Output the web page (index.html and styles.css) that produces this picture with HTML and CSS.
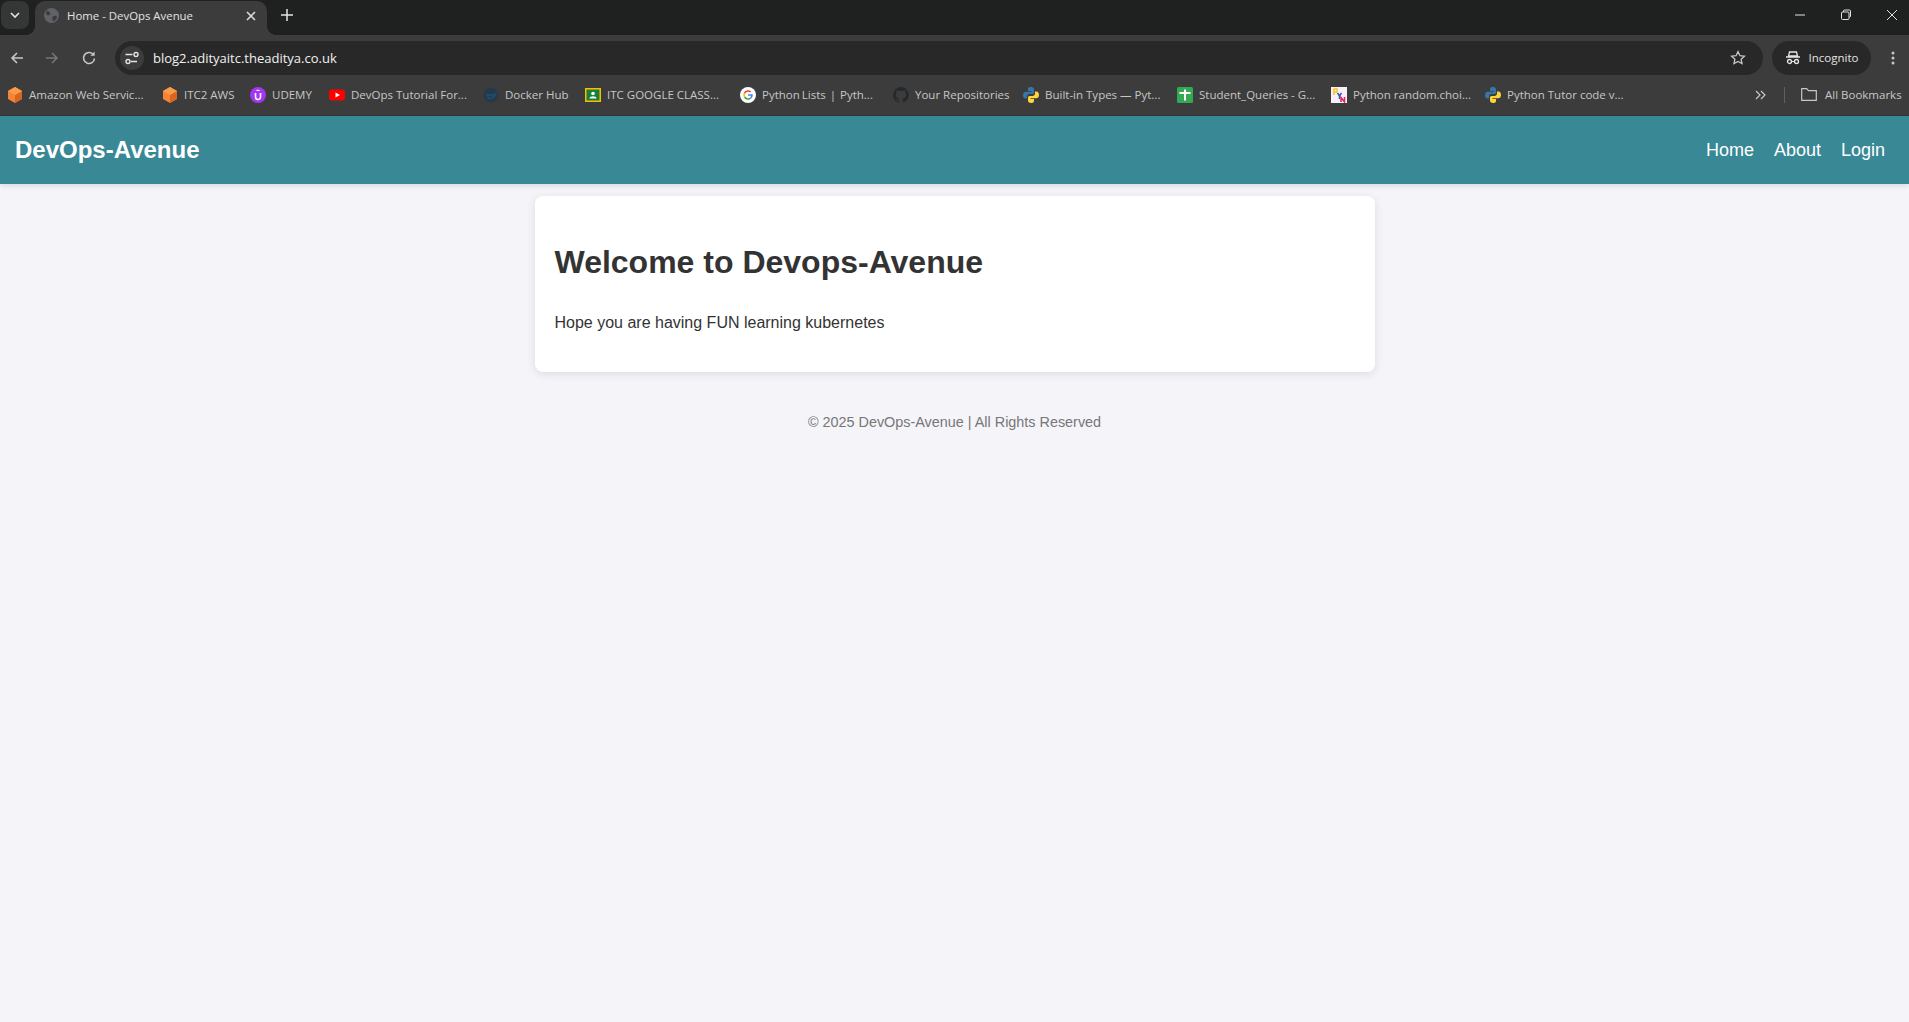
FILE: index.html
```html
<!DOCTYPE html>
<html lang="en">
<head>
    <meta charset="UTF-8">
    <title>Home - DevOps Avenue</title>
    <link rel="stylesheet" href="styles.css">
</head>
<body>
<div class="chrome">
    <div class="titlebar">
        <div class="tab-search">
            <svg width="12" height="12" viewBox="0 0 12 12"><path d="M2 4l4 4 4-4" fill="none" stroke="#e3e3e3" stroke-width="1.6"/></svg>
        </div>
        <div class="tab">
            <svg class="tab-globe" width="15" height="15" viewBox="0 0 16 16"><circle cx="8" cy="8" r="8" fill="#5f6368"/><path d="M3 3l3 1 1 3-3 1-2-2zM9 9l4-1 1 2-3 4-2-1z" fill="#3c3c3c"/></svg>
            <span class="tab-title">Home - DevOps Avenue</span>
            <svg width="12" height="12" viewBox="0 0 12 12"><path d="M2 2l8 8M10 2l-8 8" stroke="#e3e3e3" stroke-width="1.5"/></svg>
        </div>
        <svg class="new-tab" width="14" height="14" viewBox="0 0 14 14"><path d="M7 1v12M1 7h12" stroke="#e3e3e3" stroke-width="1.5"/></svg>
        <div class="win-buttons">
            <svg width="12" height="12" viewBox="0 0 12 12"><path d="M1 6h10" stroke="#e3e3e3" stroke-width="1"/></svg>
            <svg width="12" height="12" viewBox="0 0 12 12"><rect x="1.5" y="3" width="7.5" height="7.5" rx="1" fill="none" stroke="#e3e3e3"/><path d="M3.5 3V2a1 1 0 0 1 1-1h5a1 1 0 0 1 1 1v5a1 1 0 0 1-1 1H9" fill="none" stroke="#e3e3e3"/></svg>
            <svg width="12" height="12" viewBox="0 0 12 12"><path d="M1 1l10 10M11 1L1 11" stroke="#e3e3e3" stroke-width="1"/></svg>
        </div>
    </div>
    <div class="toolbar">
        <svg class="nav-icon" width="16" height="16" viewBox="0 0 16 16"><path d="M14 8H3M8 3L3 8l5 5" fill="none" stroke="#c7c7c7" stroke-width="1.6"/></svg>
        <svg class="nav-icon" width="16" height="16" viewBox="0 0 16 16"><path d="M2 8h11M8 3l5 5-5 5" fill="none" stroke="#757575" stroke-width="1.6"/></svg>
        <svg class="nav-icon nav-reload" width="16" height="16" viewBox="0 0 16 16"><path d="M13.5 8.5A5.5 5.5 0 1 1 12 4.2" fill="none" stroke="#c7c7c7" stroke-width="1.6"/><path d="M13.6 1.5v4.2H9.4z" fill="#c7c7c7"/></svg>
        <div class="omnibox">
            <div class="site-info">
                <svg width="16" height="16" viewBox="0 0 16 16"><path d="M1.5 4.5h7M13 11.500H7" stroke="#e3e3e3" stroke-width="1.4"/><circle cx="12" cy="4.5" r="2" fill="none" stroke="#e3e3e3" stroke-width="1.4"/><circle cx="4" cy="11.500" r="2" fill="none" stroke="#e3e3e3" stroke-width="1.4"/></svg>
            </div>
            <span class="url">blog2.adityaitc.theaditya.co.uk</span>
            <svg class="star" width="16" height="16" viewBox="0 0 16 16"><path d="M8 1.6l1.900 4.100 4.500.5-3.300 3 .9 4.400L8 11.400l-4 2.200.9-4.400-3.300-3 4.500-.5z" fill="none" stroke="#c7c7c7" stroke-width="1.3"/></svg>
        </div>
        <div class="incognito">
            <svg width="16" height="14" viewBox="0 0 16 14"><path d="M4.500 1h7l1 4h-9zM1 6h14" fill="none" stroke="#e3e3e3" stroke-width="1.3"/><circle cx="4.500" cy="10.500" r="2" fill="none" stroke="#e3e3e3" stroke-width="1.3"/><circle cx="11.500" cy="10.500" r="2" fill="none" stroke="#e3e3e3" stroke-width="1.3"/><path d="M6.500 10.500h3" stroke="#e3e3e3"/></svg>
            <span>Incognito</span>
        </div>
        <svg class="menu-dots" width="4" height="14" viewBox="0 0 4 14"><circle cx="2" cy="2" r="1.5" fill="#c7c7c7"/><circle cx="2" cy="7" r="1.5" fill="#c7c7c7"/><circle cx="2" cy="12" r="1.5" fill="#c7c7c7"/></svg>
    </div>
    <div class="bookmarks">
        <div class="bm bm-1">
            <svg width="16" height="16" viewBox="0 0 16 16"><path d="M8 0l7 4v8l-7 4-7-4V4z" fill="#f58536"/><path d="M8 8l7-4v8l-7 4z" fill="#d9661f"/><path d="M8 0l7 4-7 4-7-4z" fill="#fa9a4c"/></svg>
            <span>Amazon Web Servic...</span>
        </div>
        <div class="bm bm-2">
            <svg width="16" height="16" viewBox="0 0 16 16"><path d="M8 0l7 4v8l-7 4-7-4V4z" fill="#f58536"/><path d="M8 8l7-4v8l-7 4z" fill="#d9661f"/><path d="M8 0l7 4-7 4-7-4z" fill="#fa9a4c"/></svg>
            <span>ITC2 AWS</span>
        </div>
        <div class="bm bm-3">
            <svg width="16" height="16" viewBox="0 0 16 16"><circle cx="8" cy="8" r="8" fill="#a435f0"/><path d="M5.500 6v4a2.500 2.500 0 0 0 5 0V6" fill="none" stroke="#fff" stroke-width="1.6"/><path d="M8 2.500L10.500 4h-5z" fill="#fff"/></svg>
            <span>UDEMY</span>
        </div>
        <div class="bm bm-4">
            <svg width="16" height="16" viewBox="0 0 16 16"><rect y="2.500" width="16" height="11" rx="3" fill="#f00"/><path d="M6.500 5.500L11 8l-4.500 2.500z" fill="#fff"/></svg>
            <span>DevOps Tutorial For...</span>
        </div>
        <div class="bm bm-5">
            <svg width="16" height="16" viewBox="0 0 16 16"><circle cx="8" cy="8" r="7.500" fill="#26394a"/><path d="M3 8h8c1 0 2-1 2-2M4 10c2 2 6 2 8-2" fill="none" stroke="#1d5070" stroke-width="1.500"/></svg>
            <span>Docker Hub</span>
        </div>
        <div class="bm bm-6">
            <svg width="16" height="16" viewBox="0 0 16 16"><rect y="1" width="16" height="14" fill="#fbbc04"/><rect x="1.500" y="2.500" width="13" height="11" fill="#188038"/><circle cx="8" cy="6.500" r="1.800" fill="#fff"/><path d="M4.500 11.500c0-3 7-3 7 0z" fill="#fff"/></svg>
            <span>ITC GOOGLE CLASS...</span>
        </div>
        <div class="bm bm-7">
            <svg width="16" height="16" viewBox="0 0 16 16"><circle cx="8" cy="8" r="8" fill="#fff"/><path d="M8 8h4a4 4 0 0 1-1.300 3" fill="none" stroke="#4285f4" stroke-width="1.600"/><path d="M10.700 11A4 4 0 0 1 4.600 10" fill="none" stroke="#34a853" stroke-width="1.600"/><path d="M4.600 10a4 4 0 0 1 0-4" fill="none" stroke="#fbbc05" stroke-width="1.600"/><path d="M4.600 6a4 4 0 0 1 6.100-1" fill="none" stroke="#ea4335" stroke-width="1.600"/></svg>
            <span>Python Lists&nbsp; |&nbsp; Pyth...</span>
        </div>
        <div class="bm bm-8">
            <svg width="16" height="16" viewBox="0 0 16 16"><path d="M8 0a8 8 0 0 0-2.500 15.600c.4.100.5-.2.500-.4v-1.400c-2.200.5-2.700-1-2.700-1-.4-.9-.9-1.200-.9-1.200-.7-.5.100-.5.100-.5.800.100 1.200.8 1.200.8.700 1.200 1.900.9 2.300.7.100-.5.300-.9.500-1.100-1.800-.2-3.600-.9-3.600-4 0-.9.300-1.600.8-2.100-.1-.2-.4-1 .1-2.100 0 0 .7-.2 2.200.8a7.600 7.600 0 0 1 4 0c1.500-1 2.200-.8 2.200-.8.400 1.100.2 1.900.1 2.100.5.600.8 1.300.8 2.100 0 3.100-1.900 3.700-3.700 3.900.3.300.6.800.6 1.500v2.200c0 .2.100.5.600.4A8 8 0 0 0 8 0z" fill="#24292e"/></svg>
            <span>Your Repositories</span>
        </div>
        <div class="bm bm-9">
            <svg width="16" height="16" viewBox="0 0 16 16"><path d="M8 0C5 0 5 1.500 5 2.500V4h3.500v.7H3C1 4.700 0 6 0 8s1 3.500 2.500 3.500H4V9.500C4 8 5 7 6.500 7h3C10.800 7 11 6 11 5V2.500C11 1 10 0 8 0z" fill="#3776ab"/><path d="M8 16c3 0 3-1.500 3-2.500V12H7.500v-.7H13c2 0 3-1.300 3-3.300s-1-3.500-2.500-3.500H12v2c0 1.500-1 2.500-2.500 2.500h-3C5.200 9 5 10 5 11v2.500C5 15 6 16 8 16z" fill="#ffd43b"/></svg>
            <span>Built-in Types — Pyt...</span>
        </div>
        <div class="bm bm-10">
            <svg width="16" height="16" viewBox="0 0 16 16"><rect width="16" height="16" rx="1.500" fill="#34a853"/><path d="M2.500 6h11M8 2.500v11" stroke="#fff" stroke-width="2"/></svg>
            <span>Student_Queries - G...</span>
        </div>
        <div class="bm bm-11">
            <svg width="16" height="16" viewBox="0 0 16 16"><rect width="16" height="16" fill="#f7f0f7"/><path d="M3 8V2h3v3H3" fill="none" stroke="#f5c518" stroke-width="1.500"/><path d="M6.500 6l2 3 2-3M8.500 9v3" fill="none" stroke="#3b4cc0" stroke-width="1.500"/><path d="M10 15V10.500l3.500 4.500v-5" fill="none" stroke="#e0245e" stroke-width="1.500"/></svg>
            <span>Python random.choi...</span>
        </div>
        <div class="bm bm-12">
            <svg width="16" height="16" viewBox="0 0 16 16"><path d="M8 0C5 0 5 1.500 5 2.500V4h3.500v.7H3C1 4.700 0 6 0 8s1 3.500 2.500 3.500H4V9.500C4 8 5 7 6.500 7h3C10.800 7 11 6 11 5V2.500C11 1 10 0 8 0z" fill="#3776ab"/><path d="M8 16c3 0 3-1.500 3-2.500V12H7.500v-.7H13c2 0 3-1.300 3-3.300s-1-3.500-2.500-3.500H12v2c0 1.500-1 2.500-2.500 2.500h-3C5.200 9 5 10 5 11v2.500C5 15 6 16 8 16z" fill="#ffd43b"/></svg>
            <span>Python Tutor code v...</span>
        </div>
        <svg class="more" width="12" height="10" viewBox="0 0 12 10"><path d="M1 1l4 4-4 4M6 1l4 4-4 4" fill="none" stroke="#c7c7c7" stroke-width="1.200"/></svg>
        <div class="bm-divider"></div>
        <div class="all-bm">
            <svg width="16" height="13" viewBox="0 0 16 13"><path d="M.7.700h5l1.800 2h7.800v9.600H.7z" fill="none" stroke="#c7c7c7" stroke-width="1.200"/></svg>
            <span>All Bookmarks</span>
        </div>
    </div>
</div>

<header class="site-nav">
    <div class="logo">DevOps-Avenue</div>
    <nav class="nav-links">
        <a href="#">Home</a>
        <a href="#">About</a>
        <a href="#">Login</a>
    </nav>
</header>

<main class="container">
    <h1>Welcome to Devops-Avenue</h1>
    <p>Hope you are having FUN learning kubernetes</p>
</main>

<footer class="site-footer">© 2025 DevOps-Avenue | All Rights Reserved</footer>
</body>
</html>
```

FILE: styles.css
```css
html, body {
    height: 100%;
}
body {
    margin: 0;
    background-color: #f4f4f9;
    font-family: "Liberation Sans", Arial, sans-serif;
    color: #333;
    overflow: hidden;
}

/* browser window */
.chrome {
    font-family: "Open Sans", "Noto Sans", sans-serif;
    font-size: 11.5px;
    color: #e3e3e3;
}
.titlebar {
    height: 35px;
    box-sizing: border-box;
    padding-bottom: 5px;
    background-color: #1f2121;
    display: flex;
    align-items: center;
}
.tab-search {
    width: 28px;
    height: 28px;
    margin-left: 1px;
    background-color: #353636;
    border-radius: 8px;
    display: flex;
    align-items: center;
    justify-content: center;
}
.tab {
    position: relative;
    width: 232px;
    height: 34px;
    margin: 1px 0 -5px 6px;
    box-sizing: border-box;
    padding: 0 10px 5px 9px;
    background-color: #3c3c3c;
    border-radius: 10px 10px 0 0;
    display: flex;
    align-items: center;
    gap: 8px;
}
.tab::before, .tab::after {
    content: "";
    position: absolute;
    bottom: 0;
    width: 10px;
    height: 10px;
}
.tab::before {
    left: -10px;
    background: radial-gradient(circle at 0 0, transparent 10px, #3c3c3c 10.5px);
}
.tab::after {
    right: -10px;
    background: radial-gradient(circle at 100% 0, transparent 10px, #3c3c3c 10.5px);
}
.tab-title {
    flex: 1;
    font-size: 11.4px;
}
.new-tab {
    margin-left: 13px;
}
.win-buttons {
    margin-left: auto;
    width: 115px;
    padding-right: 11px;
    box-sizing: border-box;
    display: flex;
    justify-content: space-between;
}
.toolbar {
    height: 46px;
    box-sizing: border-box;
    padding-bottom: 1px;
    background-color: #3c3c3c;
    display: flex;
    align-items: center;
}
.nav-icon {
    margin-left: 9px;
    margin-right: 10px;
}
.nav-reload {
    margin-left: 11px;
}
.omnibox {
    width: 1648px;
    height: 34px;
    margin-left: 8px;
    background-color: #282828;
    border-radius: 17px;
    display: flex;
    align-items: center;
}
.site-info {
    width: 24px;
    height: 24px;
    margin-left: 5px;
    background-color: #3c3c3c;
    border-radius: 50%;
    display: flex;
    align-items: center;
    justify-content: center;
}
.url {
    margin-left: 9px;
    font-size: 13px;
    color: #f1f1f1;
}
.star {
    margin-left: auto;
    margin-right: 17px;
}
.incognito {
    width: 99px;
    height: 34px;
    margin-left: 9px;
    background-color: #282828;
    border-radius: 17px;
    display: flex;
    align-items: center;
    justify-content: center;
    gap: 8px;
}
.menu-dots {
    margin-left: 20px;
}
.bookmarks {
    height: 35px;
    box-sizing: border-box;
    padding: 0 0 7px 7px;
    background-color: #3c3c3c;
    border-bottom: 1px solid #343434;
    display: flex;
    align-items: center;
    color: #c7c7c7;
}
.bm {
    display: flex;
    align-items: center;
    gap: 6px;
    flex: none;
    white-space: nowrap;
    overflow: hidden;
}
.bm-1 { width: 155px; }
.bm-2 { width: 88px; }
.bm-3 { width: 79px; }
.bm-4 { width: 154px; }
.bm-5 { width: 102px; }
.bm-6 { width: 155px; }
.bm-7 { width: 153px; word-spacing: -1px; }
.bm-8 { width: 130px; }
.bm-9 { width: 154px; }
.bm-10 { width: 154px; }
.bm-11 { width: 154px; }
.bm-12 { width: 270px; }
.more {
    flex: none;
}
.bm-divider {
    width: 1px;
    height: 16px;
    margin-left: 17px;
    background-color: #5f5f5f;
}
.all-bm {
    margin-left: 16px;
    display: flex;
    align-items: center;
    gap: 8px;
    white-space: nowrap;
}

/* site */
.site-nav {
    height: 68px;
    box-sizing: border-box;
    padding: 0 24px 0 15px;
    background-color: #388896;
    color: #fff;
    display: flex;
    align-items: center;
    justify-content: space-between;
    box-shadow: 0 2px 5px rgba(0, 0, 0, 0.1);
}
.logo {
    font-size: 24px;
    font-weight: bold;
}
.nav-links {
    display: flex;
    gap: 20px;
}
.nav-links a {
    color: #fff;
    text-decoration: none;
    font-size: 18px;
}
.container {
    width: 840px;
    height: 176px;
    box-sizing: border-box;
    margin: 12px auto 0;
    padding: 20px;
    background-color: #fff;
    border-radius: 8px;
    box-shadow: 0 2px 10px rgba(0, 0, 0, 0.1);
}
h1 {
    margin: 28px 0 0;
    font-size: 32px;
    line-height: 37px;
    color: #333;
}
p {
    margin: 33px 0 0;
    font-size: 16px;
    line-height: 18px;
}
.site-footer {
    margin-top: 42px;
    text-align: center;
    font-size: 14.4px;
    line-height: 16px;
    color: #777;
}
```
